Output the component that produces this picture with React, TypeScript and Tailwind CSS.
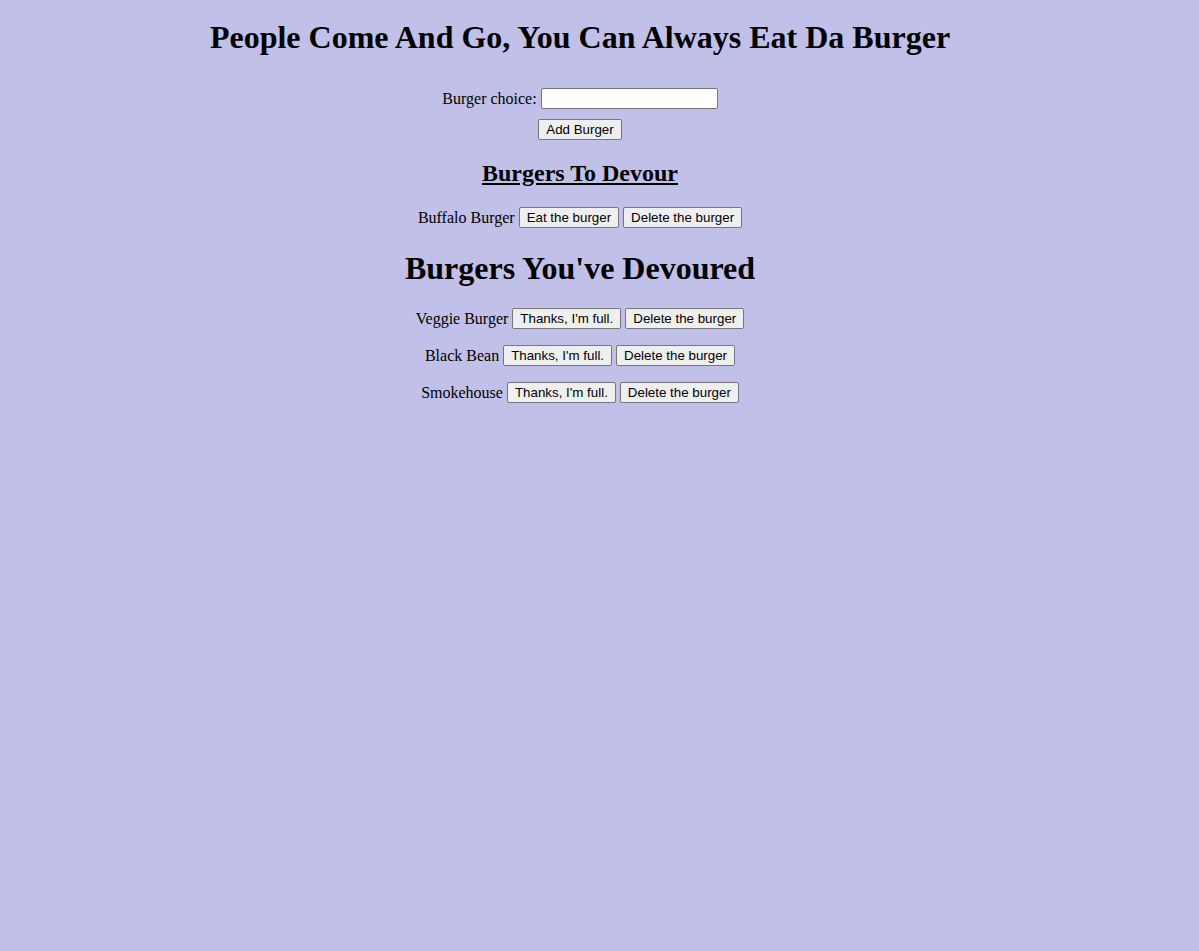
import React from 'react';

const devoured = ['Veggie Burger', 'Black Bean', 'Smokehouse'];

function Btn({ children }: { children: React.ReactNode }) {
  return (
    <button className="h-[21px] px-[7px] border border-[#767676] rounded-[2px] bg-[#efefef] font-['Liberation_Sans',Arial,sans-serif] text-[13.33px] leading-none text-black">
      {children}
    </button>
  );
}

export default function App() {
  return (
    <div className="min-h-screen bg-[#c1c0e8] font-['Liberation_Serif','Times_New_Roman',serif] text-black">
      <div className="w-[1160px] flex flex-col items-center pt-[19px]">
        <h1 className="text-[32px] font-bold leading-[37px]">
          People Come And Go, You Can Always Eat Da Burger
        </h1>

        <div className="mt-[32px] flex items-center gap-[4px] h-[21px] text-[16px]">
          <label>Burger choice:</label>
          <input type="text" className="w-[177px] h-[21px] bg-white border border-[#767676] rounded-[2px] px-[2px] text-[13.33px]" />
        </div>
        <div className="mt-[8px]">
          <Btn>Add Burger</Btn>
        </div>

        <h2 className="mt-[18px] text-[24px] font-bold leading-[28px] underline">Burgers To Devour</h2>
        <div className="mt-[20px] flex items-center gap-[4px] h-[21px] text-[16px]">
          <span>Buffalo Burger</span>
          <Btn>Eat the burger</Btn>
          <Btn>Delete the burger</Btn>
        </div>

        <h1 className="mt-[22px] text-[32px] font-bold leading-[37px]">Burgers You've Devoured</h1>
        <div className="mt-[21px] flex flex-col items-center gap-[16px]">
          {devoured.map(name => (
            <div key={name} className="flex items-center gap-[4px] h-[21px] text-[16px]">
              <span>{name}</span>
              <Btn>Thanks, I'm full.</Btn>
              <Btn>Delete the burger</Btn>
            </div>
          ))}
        </div>
      </div>
    </div>
  );
}
